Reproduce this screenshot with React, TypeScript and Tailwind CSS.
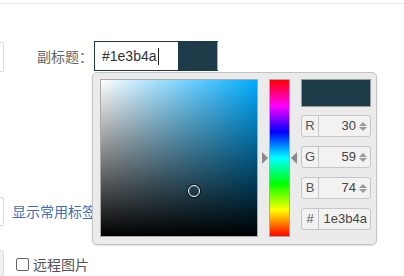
const cn = "font-['Noto_Sans_CJK_SC','Liberation_Sans',sans-serif]";
const ln = "font-['Liberation_Sans',Arial,sans-serif]";

function Spinner() {
  return (
    <div className="flex flex-col items-center gap-[1px] ml-[3px]">
      <div className="w-0 h-0 border-x-[4px] border-x-transparent border-b-[4px] border-b-[#9a9a9a]" />
      <div className="w-0 h-0 border-x-[4px] border-x-transparent border-t-[4px] border-t-[#9a9a9a]" />
    </div>
  );
}

function ChannelInput({ label, value, spin = true }: { label: string; value: string; spin?: boolean }) {
  return (
    <div className={`flex h-[22px] w-[70px] rounded-[3px] border border-[#c6c6c6] bg-[#f2f2f2] ${ln} text-[13px] text-[#555]`}>
      <div className="w-[17px] flex items-center justify-center border-r border-[#c6c6c6] shrink-0">{label}</div>
      <div className="flex-1 flex items-center justify-end pr-[3px]">
        <span className="text-[#444]">{value}</span>
        {spin && <Spinner />}
      </div>
    </div>
  );
}

function ColorPicker() {
  return (
    <div className="absolute left-[92px] top-[72px] w-[285px] h-[173px] rounded-[5px] border border-[#c4c4c4] bg-[#ebebeb] shadow-[0_1px_2px_rgba(0,0,0,0.12)] flex pl-[7px] pt-[6px]">
      {/* saturation / value */}
      <div className="relative w-[158px] h-[158px] border border-[#a9a9a9] bg-[linear-gradient(to_top,#000,transparent),linear-gradient(to_right,#fff,#00abff)]">
        <div className="absolute left-[87px] top-[105px] w-[12px] h-[12px] rounded-full border-[1.5px] border-white shadow-[0_0_0_1px_#111]" />
      </div>
      {/* hue */}
      <div className="flex items-center ml-[4px] h-[158px]">
        <div className="w-0 h-0 border-y-[6px] border-y-transparent border-l-[6px] border-l-[#8a8a8a]" />
        <div className="ml-[1px] w-[21px] h-[158px] border border-[#a9a9a9] bg-[linear-gradient(to_bottom,#f00,#f0f,#00f,#0ff,#0f0,#ff0,#f00)]" />
        <div className="ml-[1px] w-0 h-0 border-y-[6px] border-y-transparent border-r-[6px] border-r-[#8a8a8a]" />
      </div>
      {/* values */}
      <div className="ml-[4px] flex flex-col gap-[9px]">
        <div className="w-[70px] h-[28px] border border-[#9a9a9a] bg-[#1e3b4a] mb-[-1px]" />
        <ChannelInput label="R" value="30" />
        <ChannelInput label="G" value="59" />
        <ChannelInput label="B" value="74" />
        <ChannelInput label="#" value="1e3b4a" spin={false} />
      </div>
    </div>
  );
}

export default function App() {
  return (
    <div className="relative w-[404px] h-[276px] overflow-hidden bg-white pt-[3px]">
      <div className="border-t border-[#e6e6e6]" />

      <div className="mt-[37px] flex items-center h-[30px]">
        <div className="w-[4px] h-[30px] mt-[2px] border-y border-r border-[#dcdcdc] rounded-r-[2px]" />
        <span className={`ml-[33px] text-[14px] text-[#666] ${cn}`}>副标题：</span>
        <div className="ml-[1px] flex h-[30px] border-y border-l border-[#1e3b4a]">
          <div className={`w-[83px] flex items-center pl-[7px] text-[14px] text-[#333] ${ln}`}>
            #1e3b4a<span className="w-[1px] h-[17px] bg-[#222] ml-[1px]" />
          </div>
          <div className="w-[40px] bg-[#1e3b4a] border-r border-[#86bcd4]" />
        </div>
      </div>

      <div className="mt-[125px] flex items-center h-[30px]">
        <div className="w-[4px] h-[29px] border-y border-r border-[#dcdcdc] rounded-r-[2px]" />
        <span className={`ml-[8px] text-[14px] text-[#3f6fb0] ${cn}`}>显示常用标签</span>
      </div>

      <div className="mt-[24px] flex items-center h-[30px]">
        <div className="w-[4px] h-[30px] self-start border-t border-r border-[#dcdcdc] bg-[#f0f0f0] rounded-tr-[2px]" />
        <label className={`ml-[12px] -mt-[2px] flex items-center text-[14px] text-[#555] ${cn}`}>
          <span className="w-[13px] h-[13px] rounded-[2px] border border-[#666] bg-white" />
          <span className="ml-[4px]">远程图片</span>
        </label>
      </div>

      <ColorPicker />
    </div>
  );
}
